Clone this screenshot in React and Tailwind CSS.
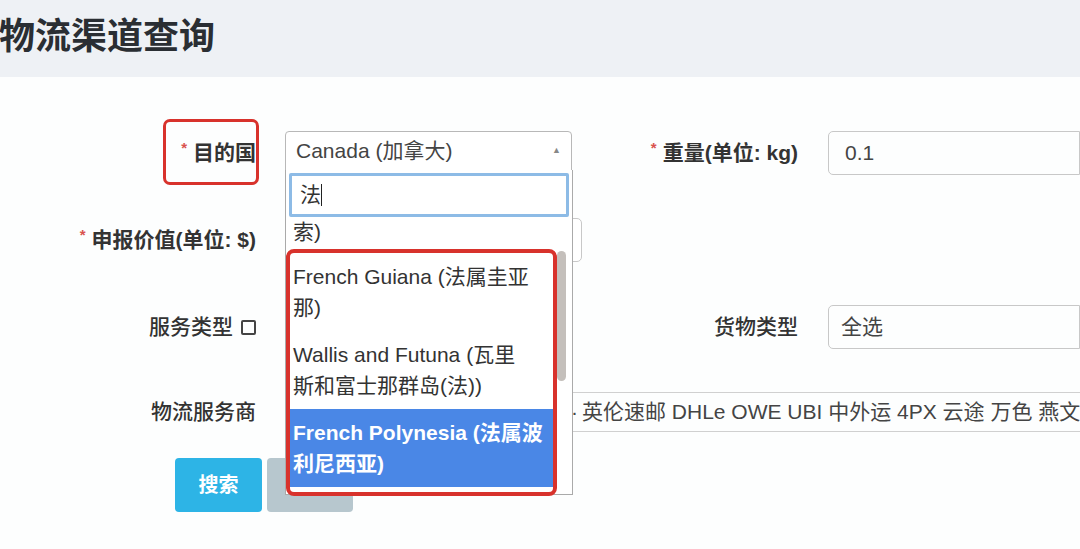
import React from 'react';

const FONT = '"Liberation Sans", "Noto Sans CJK SC", sans-serif';

const OPTIONS = [
  { lines: ['French Guiana (法属圭亚', '那)'] },
  { lines: ['Wallis and Futuna (瓦里', '斯和富士那群岛(法))'] },
  { lines: ['French Polynesia (法属波', '利尼西亚)'], active: true },
];

function Label({ children, required, bold }) {
  return (
    <div className={`text-right text-[21px] text-[#333] whitespace-nowrap ${bold ? 'font-bold' : 'font-medium'}`}>
      {required && <span className="text-[#d9534f] text-[15px] mr-[6px] align-top">*</span>}
      {children}
    </div>
  );
}

export default function App() {
  return (
    <div className="relative w-[1080px] h-[549px] overflow-hidden bg-[#fdfefe]" style={{ fontFamily: FONT }}>
      {/* 标题栏 */}
      <header className="h-[77px] bg-[#eef1f5] flex items-center pb-[4px]">
        <h1 className="text-[36px] font-bold text-[#2a2e33] -ml-[1px]">物流渠道查询</h1>
      </header>

      {/* 表单 */}
      <div className="pt-[54px] flex flex-col gap-[43px]">
        {/* 目的国 / 重量 */}
        <div className="flex items-center h-[44px]">
          <div className="w-[256px]">
            <Label required bold>目的国</Label>
          </div>
          <div className="ml-[29px] w-[287px] h-[40px] self-start border border-[#b8b8b8] rounded-t-[4px] bg-white flex items-center justify-between pl-[10px] pr-[10px]">
            <span className="text-[21px] text-[#444]">Canada (加拿大)</span>
            <span className="text-[9px] text-[#888]">▲</span>
          </div>
          <div className="w-[226px]">
            <Label required bold>重量(单位: kg)</Label>
          </div>
          <div className="ml-[30px] flex-1 h-[44px] border border-[#c8c8c8] rounded-l-[5px] flex items-center pl-[16px]">
            <span className="text-[21px] text-[#444]">0.1</span>
          </div>
        </div>

        {/* 申报价值 */}
        <div className="flex items-center h-[44px]">
          <div className="w-[256px]">
            <Label required bold>申报价值(单位: $)</Label>
          </div>
          <div className="ml-[29px] w-[297px] h-[44px] border border-[#c8c8c8] rounded-[5px] bg-white" />
        </div>

        {/* 服务类型 / 货物类型 */}
        <div className="flex items-center h-[44px]">
          <div className="w-[256px] flex justify-end items-center gap-[8px] text-[21px] font-medium text-[#333]">
            <span>服务类型</span>
            <span className="w-[15px] h-[15px] border-2 border-[#444] rounded-[2px] inline-block" />
          </div>
          <div className="ml-[29px] w-[287px]" />
          <div className="w-[226px]">
            <Label>货物类型</Label>
          </div>
          <div className="ml-[30px] flex-1 h-[44px] border border-[#c8c8c8] rounded-l-[5px] flex items-center pl-[12px]">
            <span className="text-[21px] text-[#444]">全选</span>
          </div>
        </div>

        {/* 物流服务商 */}
        <div className="flex items-center h-[40px]">
          <div className="w-[256px]">
            <Label>物流服务商</Label>
          </div>
          <div className="ml-[29px] flex-1 h-[40px] border-y border-[#d0d0d0] flex items-center overflow-hidden whitespace-nowrap text-[21px] text-[#444]">
            <span className="w-[293px] shrink-0 overflow-hidden flex justify-end">顺丰 E邮宝 中邮小包 俄速通 ·</span>
            <span className="pl-[4px]">英伦速邮 DHLe OWE UBI 中外运 4PX 云途 万色 燕文</span>
          </div>
        </div>
      </div>

      {/* 按钮 */}
      <div className="flex gap-[5px] pl-[175px] mt-[26px]">
        <button className="w-[87px] h-[54px] rounded-[4px] bg-[#2db4e6] text-white text-[20px] font-bold">搜索</button>
        <button className="w-[86px] h-[54px] rounded-[4px] bg-[#b7c7ce]" />
      </div>

      {/* 目的国标注框 */}
      <div className="absolute left-[163px] top-[119px] w-[96px] h-[66px] border-[3px] border-[#d8322c] rounded-[7px]" />

      {/* 下拉面板 */}
      <div className="absolute left-[285px] top-[170px] w-[288px] h-[325px] bg-white border border-[#aaaaaa] border-t-0 flex flex-col">
        <div className="mx-[3px] mt-[3px] h-[44px] border-[3px] border-[#8dbbe6] rounded-[2px] flex items-center pl-[8px]">
          <span className="text-[21px] text-[#333]">法</span>
          <span className="w-[1px] h-[22px] bg-[#222]" />
        </div>
        <div className="relative flex-1 overflow-hidden pl-[7px] pr-[17px] text-[21px] text-[#333]">
          <div className="leading-[31px] pb-[6px] -mt-[1px]">索)</div>
          {OPTIONS.map((o, i) => (
            <div
              key={i}
              className={`py-[8px] leading-[31px] -ml-[5px] pl-[5px] ${o.active ? 'bg-[#4a87e6] text-white font-bold' : ''}`}
            >
              {o.lines.map((l, j) => (
                <div key={j} className="whitespace-nowrap">{l}</div>
              ))}
            </div>
          ))}
          {/* 滚动条 */}
          <div className="absolute right-[6px] top-[34px] w-[9px] h-[130px] rounded-full bg-[#c4bfbb]" />
        </div>
      </div>

      {/* 列表标注框 */}
      <div className="absolute left-[286px] top-[249px] w-[271px] h-[247px] border-[4px] border-[#d8322c] rounded-[8px]" />
    </div>
  );
}
